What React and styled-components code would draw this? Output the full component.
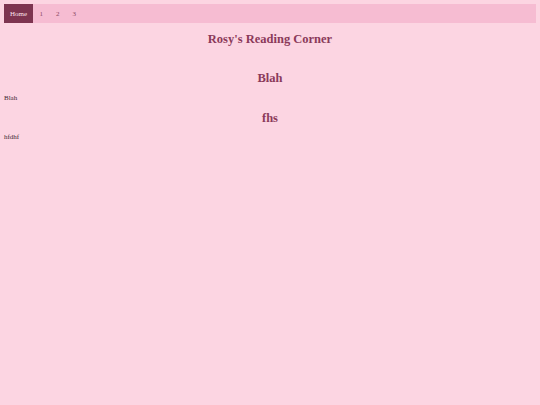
import React from 'react';
import styled, { createGlobalStyle } from 'styled-components';

const GlobalStyle = createGlobalStyle`
  html, body {
    margin: 0;
    background: #fcd5e2;
  }
  body {
    padding: 4px;
    font-family: "Liberation Serif", "Times New Roman", serif;
    font-size: 7px;
    color: #3f2a34;
  }
`;

const NavBar = styled.nav`
  display: flex;
  align-items: stretch;
  height: 19px;
  background: #f6bcd2;
`;

const NavItem = styled.a`
  display: flex;
  align-items: center;
  justify-content: center;
  box-sizing: border-box;
  padding: 0 ${(p) => (p.$active ? '0' : '6.5px')};
  width: ${(p) => (p.$active ? '29px' : 'auto')};
  background: ${(p) => (p.$active ? '#7d3450' : 'transparent')};
  color: ${(p) => (p.$active ? '#fbe3ec' : '#8b4a64')};
  text-decoration: none;
  font-size: 7px;
`;

const Title = styled.h1`
  text-align: center;
  color: #8b3a5a;
  font-size: 12.5px;
  margin: 9px 0 0;
`;

const SectionTitle = styled.h2`
  text-align: center;
  color: #8b3a5a;
  font-size: 12.5px;
  margin: 0;
  padding: ${(p) => p.$top} 0 0;
`;

const Text = styled.p`
  margin: ${(p) => p.$top} 0 0;
  font-size: 7px;
`;

const App = () => (
  <>
    <GlobalStyle />
    <NavBar>
      <NavItem $active href="#">Home</NavItem>
      <NavItem href="#">1</NavItem>
      <NavItem href="#">2</NavItem>
      <NavItem href="#">3</NavItem>
    </NavBar>
    <Title>Rosy's Reading Corner</Title>
    <SectionTitle $top="24px">Blah</SectionTitle>
    <Text $top="8px">Blah</Text>
    <SectionTitle $top="9px">fhs</SectionTitle>
    <Text $top="7px">hfdhf</Text>
  </>
);

export default App;
